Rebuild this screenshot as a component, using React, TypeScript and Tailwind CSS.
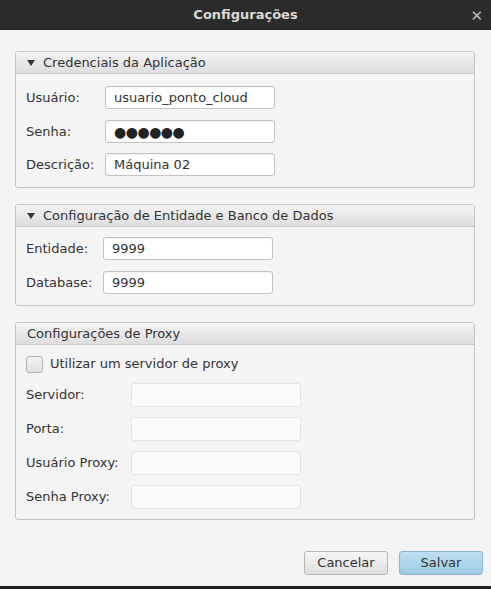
import React from "react";

const font = { fontFamily: '"DejaVu Sans", "Liberation Sans", sans-serif' };

function Field({
  label,
  value,
  labelW,
  disabled,
  password,
}: {
  label: string;
  value?: string;
  labelW: string;
  disabled?: boolean;
  password?: boolean;
}) {
  return (
    <div className="flex items-center">
      <span className={`${labelW} shrink-0 text-[13px] text-[#333333]`}>{label}</span>
      <div
        className={`flex w-[170px] items-center rounded-[3px] border px-[8px] text-[13px] ${
          disabled
            ? "h-[24px] border-[#e3e3e3] bg-[#f9f9f9]"
            : "h-[23px] border-[#c2c2c2] bg-white shadow-[inset_0_1px_1px_rgba(0,0,0,0.04)]"
        }`}
      >
        {password ? (
          <span className="text-[14px] leading-none tracking-[-0.5px] text-[#222]">●●●●●●</span>
        ) : (
          <span className="text-[#333333]">{value}</span>
        )}
      </div>
    </div>
  );
}

function Panel({
  title,
  arrow = true,
  children,
}: {
  title: string;
  arrow?: boolean;
  children: React.ReactNode;
}) {
  return (
    <div className="rounded-[3px] border border-[#c4c4c4] bg-[#f4f4f4]">
      <div className="flex h-[22px] items-center border-b border-[#c9c9c9] bg-gradient-to-b from-[#f3f3f3] to-[#dedede] pl-[11px]">
        {arrow && (
          <svg width="8" height="6" viewBox="0 0 8 6" className="mr-[8px]">
            <path d="M0 0 H8 L4 6 Z" fill="#3a3a3a" />
          </svg>
        )}
        <span className="text-[13px] text-[#333333]">{title}</span>
      </div>
      {children}
    </div>
  );
}

export default function App() {
  return (
    <div className="flex h-[589px] w-[491px] flex-col bg-[#f4f4f4]" style={font}>
      {/* title bar */}
      <div className="relative flex h-[30px] shrink-0 items-center justify-center bg-[#2b2b2b]">
        <span className="text-[13px] font-bold text-[#dcdad5]">Configurações</span>
        <span className="absolute right-[8px] top-[5px] text-[15px] text-[#bdbdbd]">✕</span>
      </div>

      <div className="flex flex-1 flex-col pl-[15px] pr-[16px] pt-[21px]">
        <div className="flex flex-col gap-[16px]">
          <Panel title="Credenciais da Aplicação">
            <div className="flex flex-col px-[10px] pb-[11px] pt-[12px]">
              <Field label="Usuário:" value="usuario_ponto_cloud" labelW="w-[79px]" />
              <div className="mt-[11px]">
                <Field label="Senha:" password labelW="w-[79px]" />
              </div>
              <div className="mt-[10px]">
                <Field label="Descrição:" value="Máquina 02" labelW="w-[79px]" />
              </div>
            </div>
          </Panel>

          <Panel title="Configuração de Entidade e Banco de Dados">
            <div className="flex flex-col gap-[11px] px-[10px] pb-[11px] pt-[10px]">
              <Field label="Entidade:" value="9999" labelW="w-[77px]" />
              <Field label="Database:" value="9999" labelW="w-[77px]" />
            </div>
          </Panel>

          <Panel title="Configurações de Proxy" arrow={false}>
            <div className="flex flex-col px-[10px] pb-[10px] pt-[10px]">
              <div className="flex h-[18px] items-center">
                <div className="h-[17px] w-[17px] rounded-[3px] border border-[#b3b3b3] bg-gradient-to-b from-[#f2f2f2] to-[#e3e3e3]" />
                <span className="ml-[7px] text-[13px] text-[#333333]">Utilizar um servidor de proxy</span>
              </div>
              <div className="mt-[10px] flex flex-col gap-[10px]">
                <Field label="Servidor:" labelW="w-[105px]" disabled />
                <Field label="Porta:" labelW="w-[105px]" disabled />
                <Field label="Usuário Proxy:" labelW="w-[105px]" disabled />
                <Field label="Senha Proxy:" labelW="w-[105px]" disabled />
              </div>
            </div>
          </Panel>
        </div>

        <div className="mt-[31px] flex justify-end gap-[11px]">
          <button className="h-[24px] w-[84px] rounded-[3px] border border-[#b5b5b5] bg-gradient-to-b from-[#f7f7f7] to-[#dedede] text-[13px] text-[#333333]">
            Cancelar
          </button>
          <button className="mr-[-8px] h-[24px] w-[84px] rounded-[3px] border border-[#8cb6d0] bg-gradient-to-b from-[#bde0f2] to-[#9fcbe3] text-[13px] text-[#333333]">
            Salvar
          </button>
        </div>
      </div>
      <div className="h-[3px] shrink-0 bg-[#1c1c1c]" />
    </div>
  );
}
